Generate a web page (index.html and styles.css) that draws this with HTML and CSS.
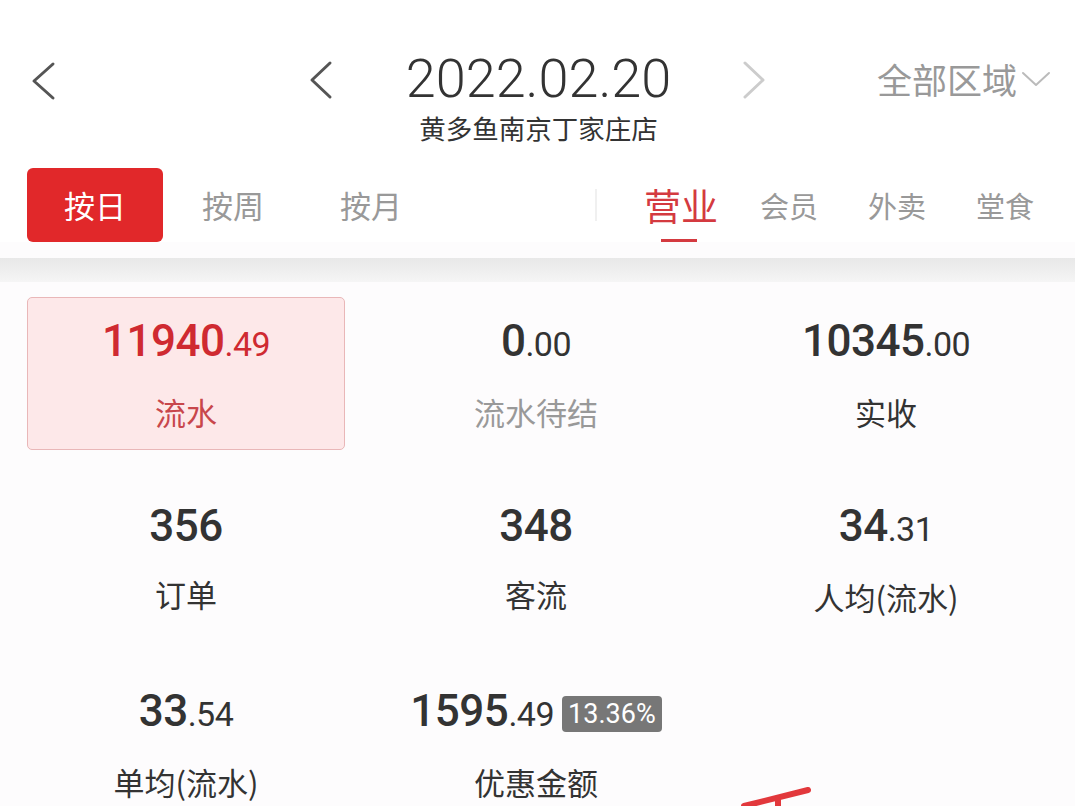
FILE: index.html
```html
<!DOCTYPE html>
<html lang="zh-CN">
<head>
  <meta charset="UTF-8">
  <meta name="viewport" content="width=device-width, initial-scale=1.0">
  <title>营业数据</title>
  <link rel="stylesheet" href="styles.css">
</head>
<body>
  <header class="top-bar">
    <div class="top-left">
      <svg class="chev back" width="28" height="40" viewBox="0 0 28 40"><path d="M24 3 L5 20 L24 37"/></svg>
    </div>
    <div class="date-nav">
      <svg class="chev prev" width="26" height="40" viewBox="0 0 26 40"><path d="M22 3 L4 20 L22 37"/></svg>
      <div class="date-block">
        <div class="date">2022.02.20</div>
        <div class="store">黄多鱼南京丁家庄店</div>
      </div>
      <svg class="chev next" width="26" height="40" viewBox="0 0 26 40"><path d="M4 3 L22 20 L4 37"/></svg>
    </div>
    <div class="top-right">
      <span class="area">全部区域</span>
      <svg class="chev down" width="30" height="20" viewBox="0 0 30 20"><path d="M2 4 L15 16 L28 4"/></svg>
    </div>
  </header>

  <nav class="tab-row">
    <div class="period-tabs">
      <span class="period active">按日</span>
      <span class="period">按周</span>
      <span class="period">按月</span>
    </div>
    <div class="divider"></div>
    <div class="type-tabs">
      <span class="type active">营业</span>
      <span class="type">会员</span>
      <span class="type">外卖</span>
      <span class="type">堂食</span>
    </div>
  </nav>

  <div class="band"></div>

  <main class="stats">
    <div class="stat selected">
      <div class="value">11940<small>.49</small></div>
      <div class="label">流水</div>
    </div>
    <div class="stat">
      <div class="value">0<small>.00</small></div>
      <div class="label muted">流水待结</div>
    </div>
    <div class="stat">
      <div class="value">10345<small>.00</small></div>
      <div class="label">实收</div>
    </div>
    <div class="stat">
      <div class="value">356</div>
      <div class="label">订单</div>
    </div>
    <div class="stat">
      <div class="value">348</div>
      <div class="label">客流</div>
    </div>
    <div class="stat">
      <div class="value">34<small>.31</small></div>
      <div class="label">人均(流水)</div>
    </div>
    <div class="stat">
      <div class="value">33<small>.54</small></div>
      <div class="label">单均(流水)</div>
    </div>
    <div class="stat">
      <div class="value">1595<small>.49</small><span class="badge">13.36%</span></div>
      <div class="label">优惠金额</div>
    </div>
  </main>

  <svg class="scribble" width="90" height="30" viewBox="0 0 90 30"><path d="M4 29 L68 13"/><path d="M38 21 L38 30"/></svg>
</body>
</html>
```

FILE: styles.css
```css
body {
  margin: 0;
  width: 1075px;
  height: 806px;
  overflow: hidden;
  background: #fdfcfd;
  font-family: "Noto Sans CJK SC", "Noto Sans", sans-serif;
  color: #333;
  position: relative;
}
.top-bar {
  display: grid;
  grid-template-columns: 1fr auto 1fr;
  align-items: start;
  padding-top: 49px;
  height: 119px;
  background: #fff;
}
.chev path {
  fill: none;
  stroke-linecap: round;
  stroke-linejoin: round;
}
.top-left {
  padding: 12px 0 0 29px;
}
.back path, .prev path {
  stroke: #555;
  stroke-width: 3;
}
.next path {
  stroke: #ccc;
  stroke-width: 3;
}
.down path {
  stroke: #bbb;
  stroke-width: 2;
}
.date-nav {
  display: flex;
  align-items: flex-start;
}
.prev {
  margin: 11px 72px 0 0;
}
.next {
  margin: 11px 0 0 70px;
}
.date-block {
  text-align: center;
}
.date {
  font-family: Roboto, "Liberation Sans", sans-serif;
  font-weight: 300;
  font-size: 54px;
  line-height: 60px;
  color: #333;
}
.store {
  font-size: 26.5px;
  line-height: 30px;
  margin-top: 4px;
  color: #333;
}
.top-right {
  display: flex;
  justify-content: flex-end;
  align-items: center;
  padding: 8px 24px 0 0;
}
.area {
  font-size: 35px;
  line-height: 44px;
  color: #999;
}
.down {
  margin-left: 4px;
}

.tab-row {
  display: flex;
  align-items: center;
  height: 74px;
  padding: 0 0 0 27px;
  background: #fff;
}
.period-tabs {
  display: flex;
}
.period {
  width: 136px;
  height: 74px;
  margin-right: 2px;
  line-height: 74px;
  text-align: center;
  font-size: 31px;
  color: #999;
  border-radius: 6px;
}
.period.active {
  background: #e1282a;
  color: #fff;
}
.divider {
  width: 2px;
  height: 32px;
  margin-left: 154px;
  background: #f0f0f0;
}
.type-tabs {
  display: flex;
  margin-left: 30px;
}
.type {
  width: 108px;
  height: 74px;
  line-height: 74px;
  text-align: center;
  font-size: 29px;
  color: #999;
  position: relative;
}
.type.active {
  font-size: 37px;
  color: #d43a40;
}
.type.active::after {
  content: "";
  position: absolute;
  left: 34px;
  bottom: 0;
  width: 36px;
  height: 3px;
  background: #d43a40;
}

.band {
  height: 24px;
  margin-top: 16px;
  background: linear-gradient(#e8e8e8, #f5f5f5);
}

.stats {
  display: grid;
  grid-template-columns: repeat(3, 350px);
  grid-auto-rows: 153px;
  row-gap: 32px;
  padding: 15px 0 0 11px;
}
.stat {
  text-align: center;
  padding-top: 19px;
  box-sizing: border-box;
}
.stat.selected {
  margin: 0 16px;
  background: #fde8e9;
  border: 1px solid #e9b7b8;
  border-radius: 5px;
  padding-top: 18px;
}
.value {
  font-family: Roboto, "Liberation Sans", sans-serif;
  font-weight: 500;
  font-size: 44px;
  line-height: 50px;
  letter-spacing: -0.5px;
  color: #333;
}
.value small {
  font-size: 34px;
  font-weight: 400;
  letter-spacing: -0.5px;
}
.selected .value {
  color: #cf2a31;
}
.badge {
  display: inline-block;
  margin-left: 8px;
  padding: 0 6px;
  height: 36px;
  line-height: 36px;
  vertical-align: 3px;
  font-size: 27px;
  font-weight: 400;
  letter-spacing: 0;
  color: #fff;
  background: #777;
  border-radius: 4px;
}
.label {
  margin-top: 23px;
  font-size: 31px;
  line-height: 40px;
  color: #333;
}
.label.muted {
  color: #999;
}
.selected .label {
  color: #c8464b;
}

.scribble {
  position: absolute;
  left: 740px;
  top: 777px;
}
.scribble path {
  fill: none;
  stroke: #e2383c;
  stroke-width: 6;
  stroke-linecap: round;
}
```
